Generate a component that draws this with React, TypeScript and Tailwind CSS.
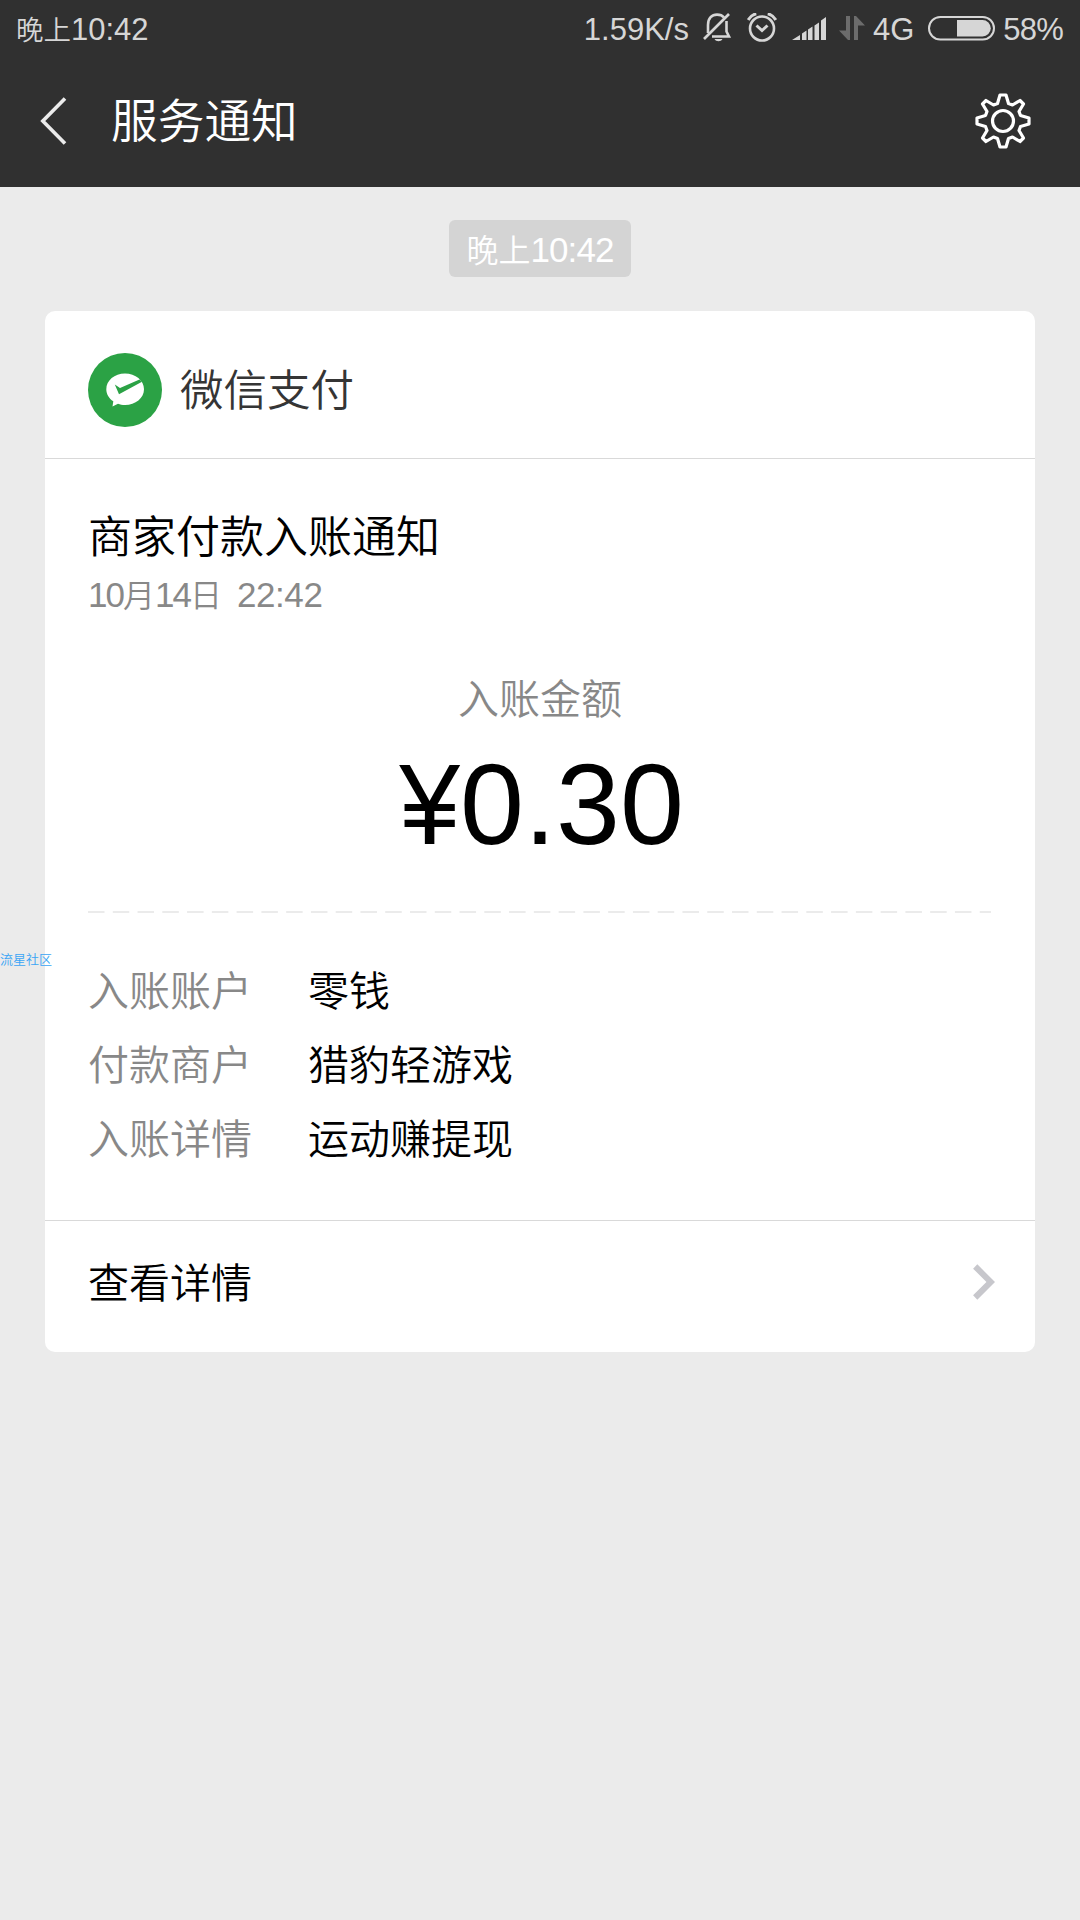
const DETAILS = [
  { label: "入账账户", value: "零钱" },
  { label: "付款商户", value: "猎豹轻游戏" },
  { label: "入账详情", value: "运动赚提现" },
];

function StatusBar() {
  return (
    <div className="flex h-[58px] items-center pl-4 pr-[17px] text-[31px] leading-none text-[#d6d6d6]">
      <span className="whitespace-nowrap">
        <span className="text-[27.5px]">晚上</span>10:42
      </span>
      <span className="ml-auto">1.59K/s</span>
      {/* звук выключен */}
      <svg className="ml-[13px]" width="30" height="32" viewBox="0 0 30 32" fill="none" stroke="#d6d6d6" strokeWidth="2.6">
        <path d="M6 20V12C6 5 10 1.6 15 1.6C18 1.6 20.5 2.6 22 4.5M24.5 8V18.5L27 23.5H10" />
        <path d="M2 26L27 1" />
        <path d="M12.5 26H20.5C19 29 14 29 12.5 26Z" fill="#d6d6d6" stroke="none" />
      </svg>
      <svg className="ml-[15px]" width="30" height="32" viewBox="0 0 30 32" fill="none" stroke="#d6d6d6" strokeWidth="2.6">
        <circle cx="15" cy="15.5" r="12" />
        <path d="M9.5 12.5L15 17.5L20.5 12.5" strokeWidth="3" />
        <path d="M1.2 7C3 3.9 5.5 1.5 9.3 0.8M28.8 7C27 3.9 24.5 1.5 20.7 0.8" strokeWidth="3" />
      </svg>
      <svg className="ml-[15px]" width="36" height="26" viewBox="0 0 36 26" fill="#d6d6d6">
        <path d="M0 24L8 19V24ZM10 17.5L14.5 14.5V24H10ZM16 13.5L20.5 10.5V24H16ZM22.5 9.5L27 6.5V24H22.5ZM29 4.5L34 1V24H29Z" />
      </svg>
      <svg className="ml-[11px]" width="26" height="26" viewBox="0 0 26 26" fill="#6c6c6c">
        <path d="M7 0H11V24H9L0 14.5H7ZM15 24V0H17L26 9.5H19V24Z" />
      </svg>
      <span className="ml-[8px]">4G</span>
      <svg className="ml-[14px]" width="68" height="26" viewBox="0 0 68 26">
        <rect x="1" y="1" width="65" height="22.5" rx="11.25" fill="none" stroke="#d6d6d6" strokeWidth="2" />
        <path d="M29 4H54.5A8.2 8.2 0 0 1 54.5 20.5H29Z" fill="#d6d6d6" />
      </svg>
      <span className="ml-[7px] tracking-[-0.8px]">58%</span>
    </div>
  );
}

function GearIcon() {
  return (
    <svg width="56" height="56" viewBox="-28 -28 56 56" fill="none" stroke="#ffffff" strokeWidth="3.2" strokeLinejoin="round">
      <circle r="10.5" />
      <path d="M-3 -26H3L5.5 -17.5L9.5 -16L17 -20.5L20.5 -17L16 -9.5L17.5 -5.5L26 -3V3L17.5 5.5L16 9.5L20.5 17L17 20.5L9.5 16L5.5 17.5L3 26H-3L-5.5 17.5L-9.5 16L-17 20.5L-20.5 17L-16 9.5L-17.5 5.5L-26 3V-3L-17.5 -5.5L-16 -9.5L-20.5 -17L-17 -20.5L-9.5 -16L-5.5 -17.5Z" />
    </svg>
  );
}

function PayLogo() {
  return (
    <svg width="74" height="74" viewBox="0 0 74 74">
      <circle cx="37" cy="37" r="37" fill="#2ba245" />
      <path d="M37 20.5C47.5 20.5 56 27.5 56 36.2C56 45 47.5 52 37 52C34.3 52 32 51.6 30 50.8L24.5 53.5L25.3 48.3C21 45.4 18.3 41 18.3 36.2C18.3 27.5 26.5 20.5 37 20.5Z" fill="#ffffff" />
      <path d="M26.8 31.5L32 35L51.5 26.6L54 28.8L31 41.2Z" fill="#2ba245" />
    </svg>
  );
}

export default function App() {
  return (
    <div className="relative h-[1920px] w-[1080px] overflow-hidden bg-[#ebebeb] font-['Liberation_Sans','Noto_Sans_CJK_SC',sans-serif] font-[350]">
      <header className="h-[187px] bg-[#303030]">
        <StatusBar />
        <div className="flex h-[126px] items-center pl-10 pr-[49px]">
          <svg width="27" height="48" viewBox="0 0 27 48" fill="none" stroke="#ebebeb" strokeWidth="3.6">
            <path d="M25 1.5L2.8 24L25 46.5" />
          </svg>
          <h1 className="ml-[44px] pt-[2px] text-[46.7px] leading-none text-white">服务通知</h1>
          <div className="ml-auto">
            <GearIcon />
          </div>
        </div>
      </header>

      <div className="mx-auto mt-[33px] flex h-[57px] w-[182px] items-center justify-center rounded-[6px] bg-[#d4d4d4] pt-px text-[35px] leading-none text-white">
        <span className="whitespace-nowrap tracking-[-0.9px]">
          <span className="text-[32px] tracking-normal">晚上</span>10:42
        </span>
      </div>

      <main className="mx-[45px] mt-[34px] h-[1041px] rounded-[10px] bg-white">
        <div className="flex h-[148px] items-center border-b border-[#d9d9d9] pl-[43px] pt-[11px]">
          <PayLogo />
          <span className="ml-[18px] pt-[3px] text-[43.5px] leading-none text-[#353535]">微信支付</span>
        </div>

        <div className="h-[762px] border-b border-[#d9d9d9] px-[43px] pt-[55px]">
          <h2 className="text-[44px] leading-[48px] text-black">商家付款入账通知</h2>
          <p className="mt-[13px] h-[40px] whitespace-nowrap text-[35px] leading-[40px] text-[#888888]">
            <span className="tracking-[-2px]">10</span>
            <span className="text-[32px]">月</span>
            <span className="tracking-[-2px]">14</span>
            <span className="text-[32px]">日</span>
            <span className="ml-[15px] tracking-[-0.4px]">22:42</span>
          </p>
          <p className="mt-[62px] text-center text-[41px] leading-[46px] text-[#888888]">入账金额</p>
          <p className="mt-[25px] text-center text-[115px] leading-[112px] text-black">
            <span className="inline-block origin-right scale-x-95">¥</span>0.30
          </p>
          <svg className="mt-[51px]" width="903" height="2" viewBox="0 0 903 2">
            <path d="M0 1H903" stroke="#ebebeb" strokeWidth="2" strokeDasharray="16.5 8.27" />
          </svg>
          <dl className="mt-[42px] text-[41px] leading-[74px]">
            {DETAILS.map((row) => (
              <div key={row.label} className="flex">
                <dt className="w-[220px] text-[#888888]">{row.label}</dt>
                <dd className="text-black">{row.value}</dd>
              </div>
            ))}
          </dl>
        </div>

        <div className="flex h-[131px] items-center justify-between pb-[9px] pl-[43px] pr-[40px]">
          <span className="pt-[5px] text-[41px] leading-none text-black">查看详情</span>
          <svg width="22" height="36" viewBox="0 0 22 36" fill="none" stroke="#c7c7cc" strokeWidth="6">
            <path d="M2.2 2.5L17.8 18L2.2 33.5" />
          </svg>
        </div>
      </main>

      {/* водяной знак поверх карточки */}
      <span className="absolute left-0 top-[953px] text-[13px] leading-[14px] text-[#3aa5f5]">流星社区</span>
    </div>
  );
}
